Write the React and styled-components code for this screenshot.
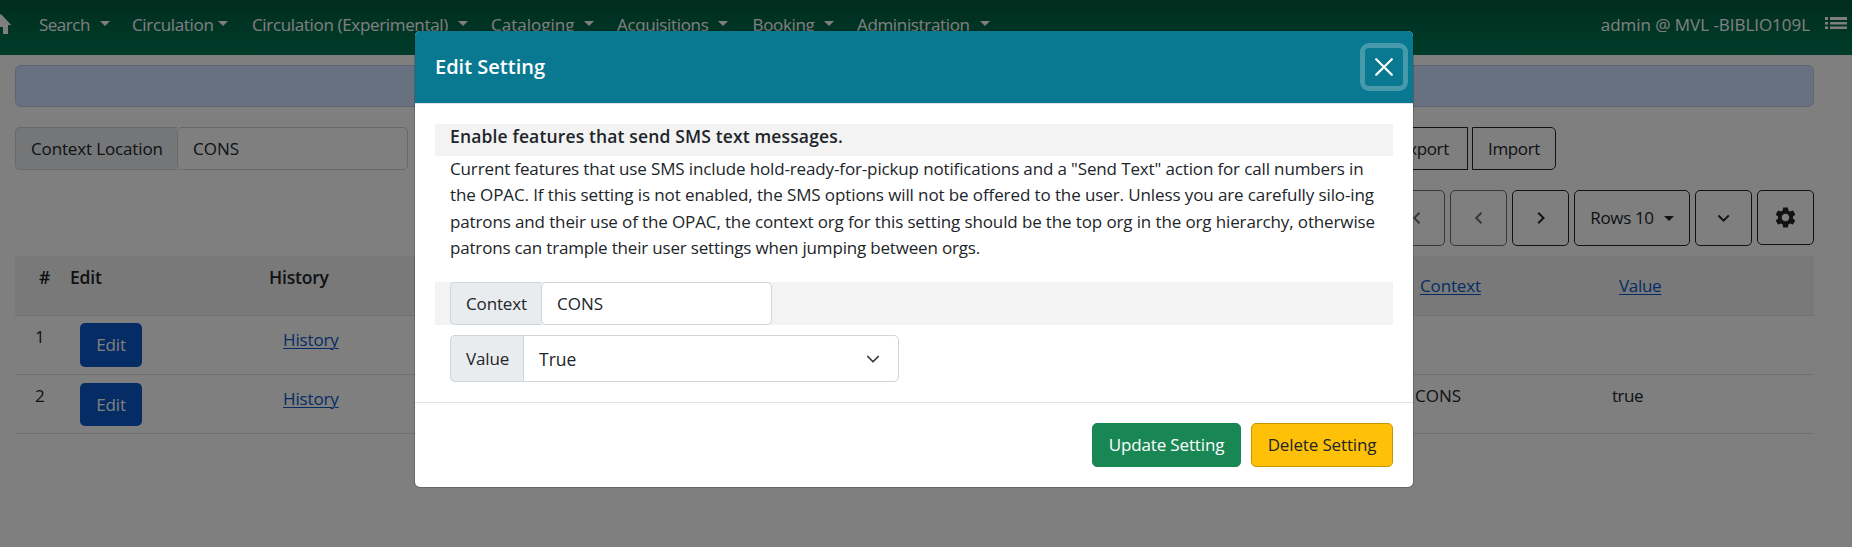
import React from 'react';
import styled, { createGlobalStyle } from 'styled-components';

const GlobalStyle = createGlobalStyle`
  *, *::before, *::after { box-sizing: border-box; }
  html, body { margin: 0; height: 100%; overflow: hidden; }
  body {
    background: #fff;
    color: #212529;
    font: 400 17px/26.25px "Open Sans", "Noto Sans", sans-serif;
    letter-spacing: -0.14px;
  }
  button { font: inherit; letter-spacing: inherit; color: inherit; margin: 0; padding: 0; }
`;

const Page = styled.div`
  position: relative;
  height: 547px;
  overflow: hidden;
`;

const Navbar = styled.nav`
  display: flex;
  height: 55px;
  padding: 12px 0 0;
  background: linear-gradient(to bottom, #00593d, #007a54);
  color: #fff;
`;

const NavHome = styled.div`
  width: 39px;
  height: 26px;
  svg { display: block; margin: -2px 0 0 -9px; }
`;

const NavItem = styled.div`
  display: flex;
  align-items: center;
  gap: ${(p) => p.$gap ?? 10}px;
  width: ${(p) => p.$width}px;
  height: 26px;
  white-space: nowrap;
  letter-spacing: ${(p) => p.$track ?? -0.34}px;
`;

const Caret = styled.span`
  width: 0;
  height: 0;
  margin-bottom: ${(p) => p.$lift ?? 0}px;
  border: 5px solid transparent;
  border-top-color: currentColor;
  border-bottom: 0;
`;

const NavUser = styled.div`
  display: flex;
  gap: 15px;
  margin-left: auto;
  padding: 0 5px 0 0;
  letter-spacing: -0.04px;
  svg { margin-top: 5px; }
`;

const Content = styled.main`
  padding: 10px 38px 0 15px;
`;

const Banner = styled.div`
  height: 42px;
  border: 1px solid #bacbee;
  border-radius: 6px;
  background: #cfe2ff;
`;

const ActionRow = styled.div`
  display: flex;
  justify-content: space-between;
  margin: 20px 258px 0 0;
`;

const InputGroup = styled.div`
  display: flex;
  width: ${(p) => p.$width}px;
  height: ${(p) => p.$height ?? 43}px;
`;

const GroupLabel = styled.span`
  display: flex;
  align-items: center;
  width: ${(p) => p.$width}px;
  padding: 2px 0 0 15px;
  border: 1px solid #ced4da;
  border-right: 0;
  border-radius: 5px 0 0 5px;
  background: #e9ecef;
  white-space: nowrap;
`;

const GroupField = styled.div`
  display: flex;
  flex: 1;
  align-items: center;
  justify-content: space-between;
  padding: 2px 18px 0 15px;
  border: 1px solid #ced4da;
  border-radius: ${(p) => (p.$square ? '0 5px 5px 0' : '5px')};
  background: #fff;
  letter-spacing: 0;
`;

const ButtonRow = styled.div`
  display: flex;
  gap: ${(p) => p.$gap}px;
  justify-content: flex-end;
`;

const OutlineButton = styled.button`
  display: flex;
  align-items: center;
  justify-content: center;
  gap: 10px;
  width: ${(p) => p.$width}px;
  height: ${(p) => p.$height}px;
  padding-top: ${(p) => p.$drop ?? 0}px;
  border: 1px solid #212529;
  border-radius: ${(p) => p.$radius ?? '5px'};
  background: transparent;
  opacity: ${(p) => (p.$dim ? 0.65 : 1)};
  letter-spacing: -0.35px;
`;

const GridToolbar = styled(ButtonRow)`
  margin: 20px 0 10px;
`;

const TableRow = styled.div`
  display: grid;
  grid-template-columns: 55px 199px 1fr 197px 202px;
  height: 59px;
  border-bottom: 1px solid #dee2e6;
`;

const HeaderRow = styled(TableRow)`
  height: 60px;
  background: #f3f3f3;
  font-weight: 600;
`;

const Cell = styled.div`
  padding: ${(p) => p.$top ?? 8}px 0 0 ${(p) => p.$left ?? 0}px;
  letter-spacing: ${(p) => p.$track ?? -0.14}px;
`;

const HeadCell = styled(Cell)`
  font-size: 17.5px;
  letter-spacing: -0.2px;
`;

const Link = styled.a`
  color: #0a58ca;
  font-weight: 400;
  text-decoration: underline;
  text-decoration-thickness: 1px;
  text-underline-offset: 2px;
`;

const EditButton = styled.button`
  display: block;
  width: 62px;
  height: ${(p) => p.$height}px;
  padding-top: 1px;
  border: 0;
  border-radius: 5px;
  background: #0a58ca;
  color: #fff;
`;

const Overlay = styled.div`
  position: absolute;
  inset: 0;
  display: flex;
  align-items: flex-start;
  justify-content: center;
  padding: 31px 24px 0 0;
  background: rgba(0, 0, 0, 0.5);
`;

const Modal = styled.section`
  width: 998px;
  height: 456px;
  border-radius: 5px;
  background: #fff;
  box-shadow: 0 0 0 1px rgba(0, 0, 0, 0.18);
  overflow: hidden;
`;

const ModalHeader = styled.header`
  display: flex;
  align-items: center;
  justify-content: space-between;
  height: 73px;
  padding: 0 5px 0 20px;
  border-bottom: 1px solid #dee2e6;
  background: #087990;
  background-clip: padding-box;
  color: #fff;
`;

const Title = styled.h4`
  margin: 1px 0 0;
  font-size: 20px;
  font-weight: 600;
  letter-spacing: 0;
`;

const CloseButton = styled.button`
  display: flex;
  align-items: center;
  justify-content: center;
  width: 48px;
  height: 48px;
  border: 5px solid rgba(255, 255, 255, 0.25);
  border-radius: 9px;
  background: transparent;
`;

const ModalBody = styled.div`
  height: 299px;
  padding: 20px 20px 0;
  border-bottom: 1px solid #dee2e6;
`;

const Strip = styled.div`
  padding-left: 15px;
  background: #f3f3f3;
`;

const SettingName = styled(Strip)`
  height: 32px;
  font-size: 17.5px;
  font-weight: 600;
  line-height: 25px;
  letter-spacing: 0.14px;
`;

const Description = styled.p`
  margin: 0 0 21px 15px;
  white-space: nowrap;
`;

const Line = styled.span`
  display: block;
  letter-spacing: ${(p) => p.$track}px;
`;

const ValueRow = styled.div`
  padding: 10px 0 0 15px;
`;

const SelectText = styled.span`
  font-size: 17.5px;
`;

const ModalFooter = styled.footer`
  display: flex;
  justify-content: flex-end;
  gap: 10px;
  padding: 20px 20px 0;
`;

const SolidButton = styled.button`
  width: ${(p) => p.$width}px;
  height: 44px;
  padding-top: 1px;
  border: 1px solid ${(p) => p.$edge};
  border-radius: 5px;
  background: ${(p) => p.$fill};
  color: ${(p) => p.$ink};
`;

const HomeIcon = () => (
  <svg width="24" height="26" viewBox="0 0 24 26" fill="currentColor">
    <path d="M8 24v-7h4v7h5v-9h3.2L10 4 0 15h3v9z" />
  </svg>
);

const ListIcon = () => (
  <svg width="22" height="13" viewBox="0 0 22 13" fill="currentColor">
    <path d="M0 0h3v3H0zM5 0h17v3H5zM0 5h3v2.5H0zM5 5h17v2.5H5zM0 9.5h3v2.5H0zM5 9.5h17v2.5H5z" />
  </svg>
);

const GearIcon = () => (
  <svg width="25" height="25" viewBox="0 0 24 24" fill="currentColor">
    <path d="M19.14 12.94c.04-.3.06-.61.06-.94 0-.32-.02-.64-.07-.94l2.03-1.58c.18-.14.23-.41.12-.61l-1.92-3.32c-.12-.22-.37-.29-.59-.22l-2.39.96c-.5-.38-1.03-.7-1.62-.94l-.36-2.54c-.04-.24-.24-.41-.48-.41h-3.84c-.24 0-.43.17-.47.41l-.36 2.54c-.59.24-1.13.57-1.62.94l-2.39-.96c-.22-.08-.47 0-.59.22L2.74 8.87c-.12.21-.08.47.12.61l2.03 1.58c-.05.3-.09.63-.09.94s.02.64.07.94l-2.03 1.58c-.18.14-.23.41-.12.61l1.92 3.32c.12.22.37.29.59.22l2.39-.96c.5.38 1.03.7 1.62.94l.36 2.54c.05.24.24.41.48.41h3.84c.24 0 .44-.17.47-.41l.36-2.54c.59-.24 1.13-.56 1.62-.94l2.39.96c.22.08.47 0 .59-.22l1.92-3.32c.12-.22.07-.47-.12-.61l-2.01-1.58zM12 15.6c-1.98 0-3.6-1.62-3.6-3.6s1.62-3.6 3.6-3.6 3.6 1.62 3.6 3.6-1.62 3.6-3.6 3.6z" />
  </svg>
);

const CHEVRONS = {
  left: 'M8.5 1.8 3.2 7l5.3 5.2',
  right: 'M3.2 1.8 8.5 7l-5.3 5.2',
  down: 'M.4 4.4 5.6 9.6l5.2-5.2',
};

const Chevron = ({ dir }) => (
  <svg width="12" height="14" viewBox="0 0 12 14" fill="none" stroke="currentColor" strokeWidth="2">
    <path d={CHEVRONS[dir]} />
  </svg>
);

const SelectArrow = () => (
  <svg width="14" height="14" viewBox="0 0 16 16" fill="none" stroke="#343a40" strokeWidth="2" strokeLinecap="round" strokeLinejoin="round">
    <path d="m2 4 6 6 6-6" />
  </svg>
);

const CloseIcon = () => (
  <svg width="18" height="18" viewBox="0 0 18 18" fill="none" stroke="#fff" strokeWidth="2.2" strokeLinecap="round">
    <path d="M1.2 1.2l15.6 15.6M16.8 1.2 1.2 16.8" />
  </svg>
);

const NAV = [
  { label: 'Search', width: 93, track: -0.5 },
  { label: 'Circulation', width: 120, gap: 4 },
  { label: 'Circulation (Experimental)', width: 239 },
  { label: 'Cataloging', width: 126, track: 0 },
  { label: 'Acquisitions', width: 135.5 },
  { label: 'Booking', width: 104.5 },
  { label: 'Administration', width: 140 },
];

export default function App() {
  return (
    <Page>
      <GlobalStyle />
      <Navbar>
        <NavHome><HomeIcon /></NavHome>
        {NAV.map((n) => (
          <NavItem key={n.label} $width={n.width} $gap={n.gap} $track={n.track}>
            {n.label}
            <Caret $lift={4} />
          </NavItem>
        ))}
        <NavUser>
          <span>admin @ MVL -BIBLIO109L</span>
          <ListIcon />
        </NavUser>
      </Navbar>

      <Content>
        <Banner />
        <ActionRow>
          <InputGroup $width={393}>
            <GroupLabel $width={162}>Context Location</GroupLabel>
            <GroupField>CONS</GroupField>
          </InputGroup>
          <ButtonRow $gap={4}>
            <OutlineButton $width={88} $height={43} $drop={2} $radius="0">Export</OutlineButton>
            <OutlineButton $width={84} $height={43} $drop={2} $radius="0 5px 5px 0">Import</OutlineButton>
          </ButtonRow>
        </ActionRow>

        <GridToolbar $gap={5}>
          <OutlineButton $width={57} $height={56} $dim><Chevron dir="left" /></OutlineButton>
          <OutlineButton $width={57} $height={56} $dim><Chevron dir="left" /></OutlineButton>
          <OutlineButton $width={57} $height={56}><Chevron dir="right" /></OutlineButton>
          <OutlineButton $width={116} $height={56} $drop={1}>Rows 10<Caret $lift={1} /></OutlineButton>
          <OutlineButton $width={57} $height={56}><Chevron dir="down" /></OutlineButton>
          <OutlineButton $width={57} $height={55}><GearIcon /></OutlineButton>
        </GridToolbar>

        <HeaderRow>
          <HeadCell $left={24}>#</HeadCell>
          <HeadCell>Edit</HeadCell>
          <HeadCell>History</HeadCell>
          <Cell $left={5} $top={17}><Link>Context</Link></Cell>
          <Cell $left={7} $top={17} $track={-0.3}><Link>Value</Link></Cell>
        </HeaderRow>
        <TableRow>
          <Cell $left={20}>1</Cell>
          <Cell $left={10} $top={7}><EditButton $height={44}>Edit</EditButton></Cell>
          <Cell $left={14} $top={11}><Link>History</Link></Cell>
          <Cell />
          <Cell />
        </TableRow>
        <TableRow>
          <Cell $left={20}>2</Cell>
          <Cell $left={10}><EditButton $height={43}>Edit</EditButton></Cell>
          <Cell $left={14} $top={11}><Link>History</Link></Cell>
          <Cell $track={0}>CONS</Cell>
          <Cell $track={-0.45}>true</Cell>
        </TableRow>
      </Content>

      <Overlay>
        <Modal>
          <ModalHeader>
            <Title>Edit Setting</Title>
            <CloseButton aria-label="Close"><CloseIcon /></CloseButton>
          </ModalHeader>
          <ModalBody>
            <SettingName>Enable features that send SMS text messages.</SettingName>
            <Description>
              <Line $track={-0.137}>Current features that use SMS include hold-ready-for-pickup notifications and a "Send Text" action for call numbers in</Line>
              <Line $track={-0.106}>the OPAC. If this setting is not enabled, the SMS options will not be offered to the user. Unless you are carefully silo-ing</Line>
              <Line $track={-0.128}>patrons and their use of the OPAC, the context org for this setting should be the top org in the org hierarchy, otherwise</Line>
              <Line $track={-0.181}>patrons can trample their user settings when jumping between orgs.</Line>
            </Description>
            <Strip>
              <InputGroup $width={322}>
                <GroupLabel $width={91}>Context</GroupLabel>
                <GroupField>CONS</GroupField>
              </InputGroup>
            </Strip>
            <ValueRow>
              <InputGroup $width={449} $height={47}>
                <GroupLabel $width={73}>Value</GroupLabel>
                <GroupField $square>
                  <SelectText>True</SelectText>
                  <SelectArrow />
                </GroupField>
              </InputGroup>
            </ValueRow>
          </ModalBody>
          <ModalFooter>
            <SolidButton $width={149} $fill="#198754" $edge="#198754" $ink="#fff">Update Setting</SolidButton>
            <SolidButton $width={142} $fill="#ffc107" $edge="#c69500" $ink="#212529">Delete Setting</SolidButton>
          </ModalFooter>
        </Modal>
      </Overlay>
    </Page>
  );
}
